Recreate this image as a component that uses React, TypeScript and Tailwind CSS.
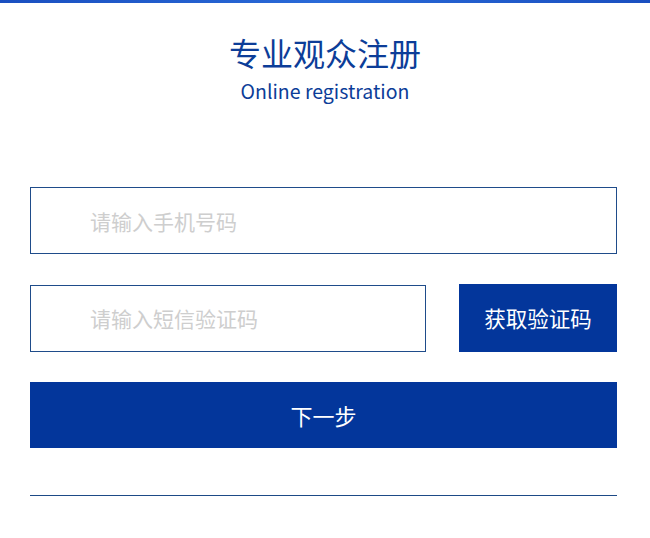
export default function App() {
  return (
    <div
      className="flex h-[538px] w-[650px] flex-col bg-white"
      style={{ fontFamily: '"Noto Sans CJK SC", "Noto Sans", sans-serif' }}
    >
      <div className="h-[3px] w-full bg-gradient-to-r from-[#1a4fc0] via-[#2a6ad8] to-[#1a4fc0]" />

      <div className="mt-[29px] flex flex-col items-center">
        <h1 className="text-[32px] leading-[40px] font-normal text-[#0c3d98]">专业观众注册</h1>
        <p className="mt-[6px] text-[19.5px] leading-[26px] text-[#0c3d98]">Online registration</p>
      </div>

      <form className="mt-[83px] flex w-[647px] flex-col px-[30px]" onSubmit={(e) => e.preventDefault()}>
        <input
          type="tel"
          placeholder="请输入手机号码"
          className="h-[67px] w-full border border-[#1f4c8a] bg-white pl-[59px] text-[21px] text-[#333] outline-none placeholder:text-[#cecece]"
        />

        <div className="mt-[30px] flex items-center justify-between">
          <input
            type="text"
            placeholder="请输入短信验证码"
            className="h-[67px] w-[396px] border border-[#1f4c8a] bg-white pl-[59px] text-[21px] text-[#333] outline-none placeholder:text-[#cecece]"
          />
          <button type="button" className="h-[68px] w-[158px] bg-[#03369b] text-[21.5px] text-white">
            获取验证码
          </button>
        </div>

        <button type="submit" className="mt-[30px] h-[66px] w-full bg-[#03369b] text-[22px] text-white">
          下一步
        </button>

        <div className="mt-[47px] h-px w-full bg-[#1d4a86]" />
      </form>
    </div>
  );
}
